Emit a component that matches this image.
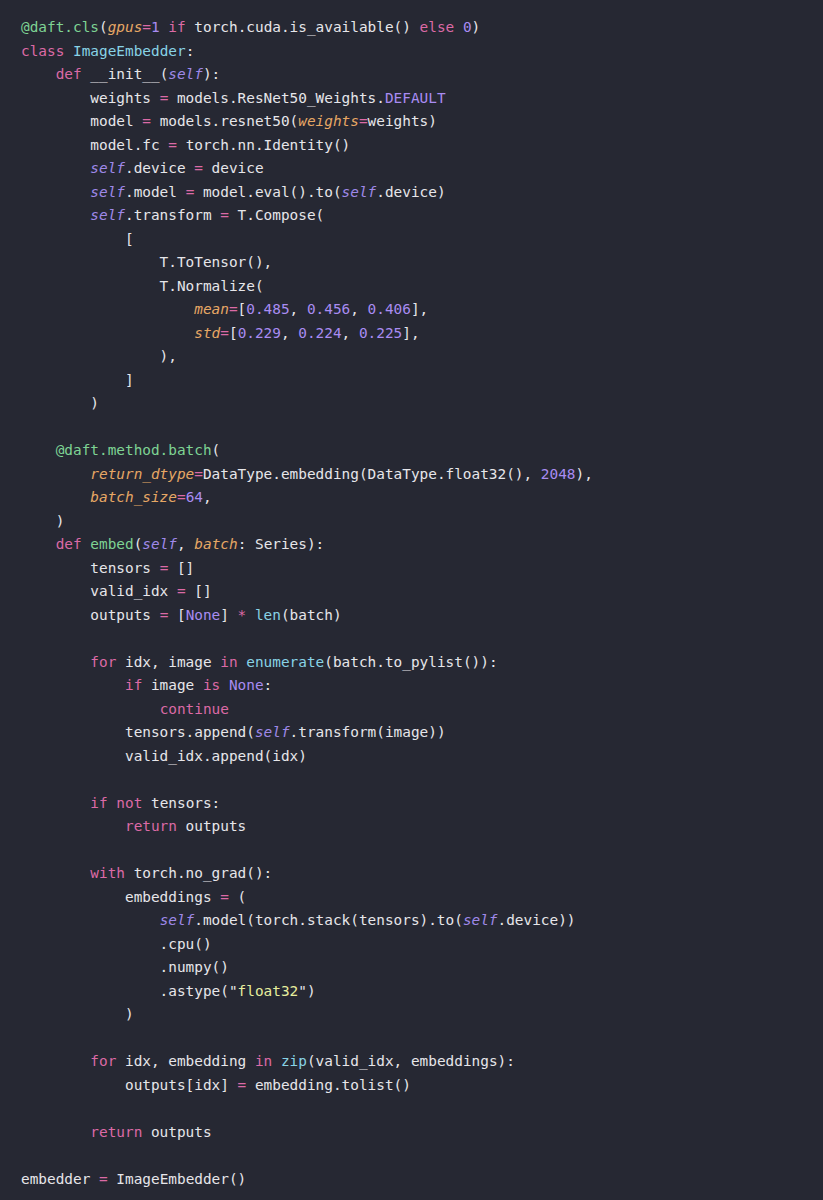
type Tok = [string, string];

const K = 'text-[#dc6aa6]';
const G = 'text-[#7ed394]';
const C = 'text-[#88d3e6]';
const P = 'text-[#a98cf2]';
const O = 'text-[#e6a765] italic';
const S = 'text-[#9f88e8] italic';
const Y = 'text-[#e6ee9e]';
const T = '';

const k = (t: string): Tok => [K, t];
const g = (t: string): Tok => [G, t];
const c = (t: string): Tok => [C, t];
const p = (t: string): Tok => [P, t];
const o = (t: string): Tok => [O, t];
const s = (t: string): Tok => [S, t];
const y = (t: string): Tok => [Y, t];
const t = (x: string): Tok => [T, x];

const lines: Tok[][] = [
  [g('@daft.cls'), t('('), o('gpus'), k('='), p('1'), t(' '), k('if'), t(' torch.cuda.is_available() '), k('else'), t(' '), p('0'), t(')')],
  [k('class'), t(' '), c('ImageEmbedder'), t(':')],
  [t('    '), k('def'), t(' __init__('), s('self'), t('):')],
  [t('        weights '), k('='), t(' models.ResNet50_Weights.'), p('DEFAULT')],
  [t('        model '), k('='), t(' models.resnet50('), o('weights'), k('='), t('weights)')],
  [t('        model.fc '), k('='), t(' torch.nn.Identity()')],
  [t('        '), s('self'), t('.device '), k('='), t(' device')],
  [t('        '), s('self'), t('.model '), k('='), t(' model.eval().to('), s('self'), t('.device)')],
  [t('        '), s('self'), t('.transform '), k('='), t(' T.Compose(')],
  [t('            [')],
  [t('                T.ToTensor(),')],
  [t('                T.Normalize(')],
  [t('                    '), o('mean'), k('='), t('['), p('0.485'), t(', '), p('0.456'), t(', '), p('0.406'), t('],')],
  [t('                    '), o('std'), k('='), t('['), p('0.229'), t(', '), p('0.224'), t(', '), p('0.225'), t('],')],
  [t('                ),')],
  [t('            ]')],
  [t('        )')],
  [],
  [t('    '), g('@daft.method.batch'), t('(')],
  [t('        '), o('return_dtype'), k('='), t('DataType.embedding(DataType.float32(), '), p('2048'), t('),')],
  [t('        '), o('batch_size'), k('='), p('64'), t(',')],
  [t('    )')],
  [t('    '), k('def'), t(' '), g('embed'), t('('), s('self'), t(', '), o('batch'), t(': Series):')],
  [t('        tensors '), k('='), t(' []')],
  [t('        valid_idx '), k('='), t(' []')],
  [t('        outputs '), k('='), t(' ['), p('None'), t('] '), k('*'), t(' '), c('len'), t('(batch)')],
  [],
  [t('        '), k('for'), t(' idx, image '), k('in'), t(' '), c('enumerate'), t('(batch.to_pylist()):')],
  [t('            '), k('if'), t(' image '), k('is'), t(' '), p('None'), t(':')],
  [t('                '), k('continue')],
  [t('            tensors.append('), s('self'), t('.transform(image))')],
  [t('            valid_idx.append(idx)')],
  [],
  [t('        '), k('if'), t(' '), k('not'), t(' tensors:')],
  [t('            '), k('return'), t(' outputs')],
  [],
  [t('        '), k('with'), t(' torch.no_grad():')],
  [t('            embeddings '), k('='), t(' (')],
  [t('                '), s('self'), t('.model(torch.stack(tensors).to('), s('self'), t('.device))')],
  [t('                .cpu()')],
  [t('                .numpy()')],
  [t('                .astype("'), y('float32'), t('")')],
  [t('            )')],
  [],
  [t('        '), k('for'), t(' idx, embedding '), k('in'), t(' '), c('zip'), t('(valid_idx, embeddings):')],
  [t('            outputs[idx] '), k('='), t(' embedding.tolist()')],
  [],
  [t('        '), k('return'), t(' outputs')],
  [],
  [t('embedder '), k('='), t(' ImageEmbedder()')],
];

export default function App() {
  return (
    <div className="min-h-[1200px] w-[823px] bg-[#262833] pt-[16px] pl-[21px] text-[#e6e6ea] font-['DejaVu_Sans_Mono',monospace] text-[14.4px]">
      {lines.map((line, i) => (
        <div key={i} className="h-[23.5px] leading-[23.5px] whitespace-pre">
          {line.map(([cls, text], j) => (
            <span key={j} className={cls}>
              {text}
            </span>
          ))}
        </div>
      ))}
    </div>
  );
}
